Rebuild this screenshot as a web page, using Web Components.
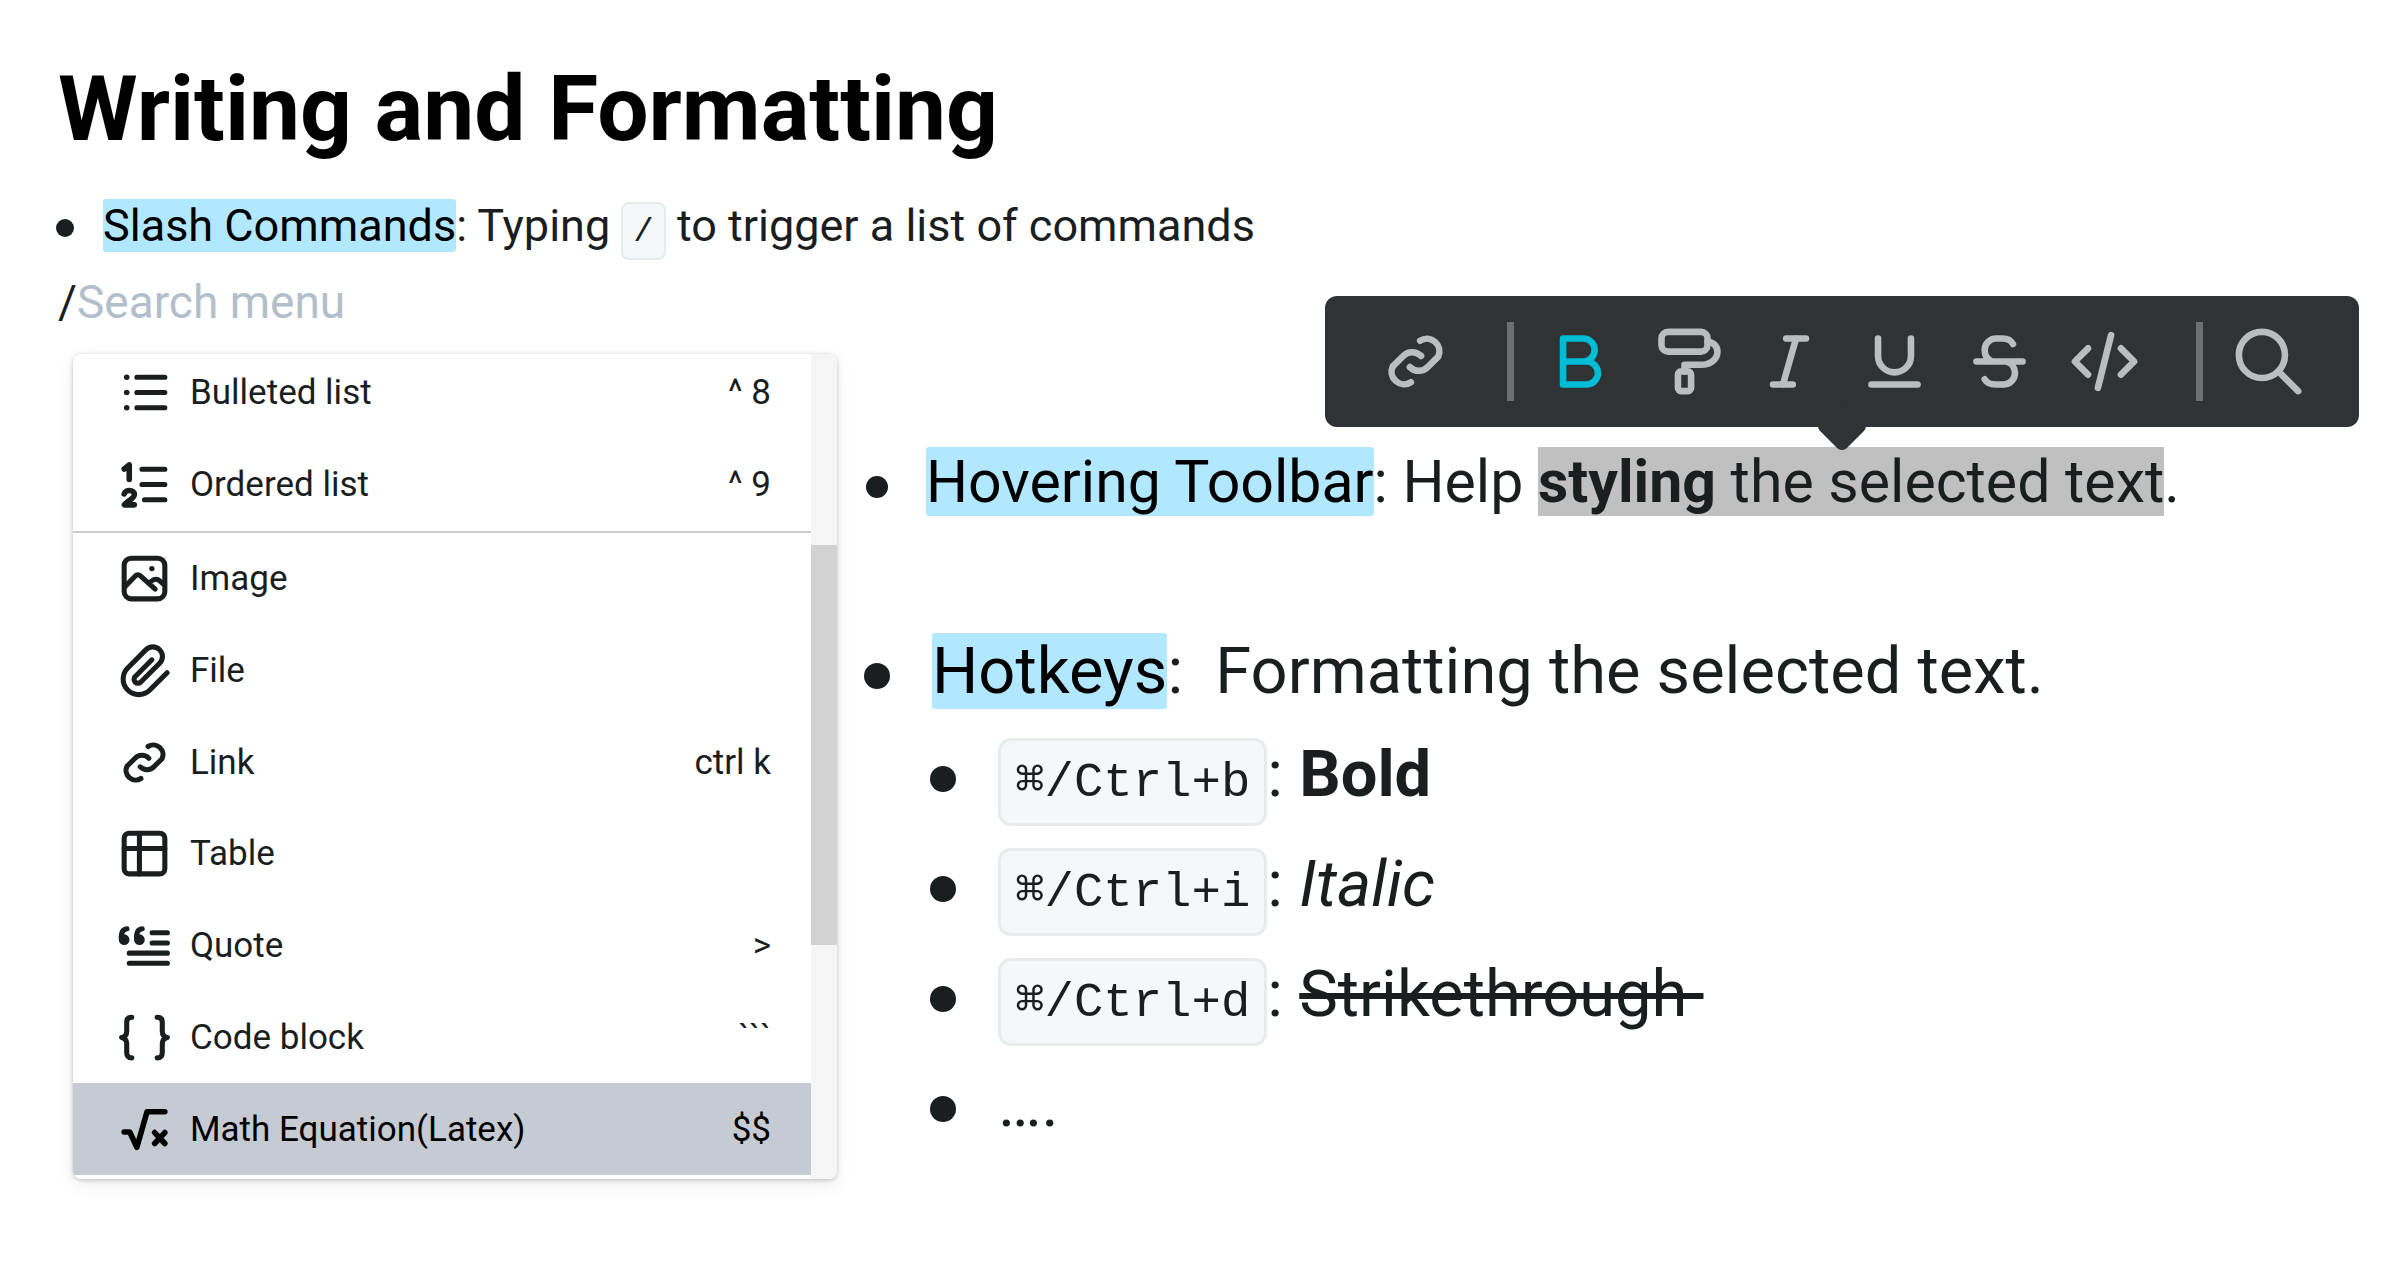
<!DOCTYPE html>
<html lang="en">
<head>
<meta charset="utf-8">
<meta name="viewport" content="width=device-width, initial-scale=1">
<title>Writing and Formatting</title>
<style>
  body { margin: 0; background: #fff; color: #1b1e1f; font-family: Roboto, "Liberation Sans", sans-serif; }
</style>
</head>
<body>
<doc-page>
  <h1 slot="title">Writing and Formatting</h1>
  <bullet-line slot="intro"><text-mark>Slash Commands</text-mark>: Typing <key-cap>/</key-cap> to trigger a list of commands</bullet-line>
  <slash-search slot="search"></slash-search>
  <slash-menu slot="menu">
    <menu-entry icon="bullets" label="Bulleted list" hint="^ 8"></menu-entry>
    <menu-entry icon="numbers" label="Ordered list" hint="^ 9"></menu-entry>
    <menu-divider></menu-divider>
    <menu-entry icon="image" label="Image"></menu-entry>
    <menu-entry icon="clip" label="File"></menu-entry>
    <menu-entry icon="link" label="Link" hint="ctrl k"></menu-entry>
    <menu-entry icon="table" label="Table"></menu-entry>
    <menu-entry icon="quote" label="Quote" hint="&gt;"></menu-entry>
    <menu-entry icon="braces" label="Code block" hint="```"></menu-entry>
    <menu-entry icon="root" label="Math Equation(Latex)" hint="$$" active></menu-entry>
  </slash-menu>
  <bullet-line slot="hover" size="medium"><text-mark>Hovering Toolbar</text-mark>: Help <text-selection><b>styling</b> the selected text</text-selection>.</bullet-line>
  <bullet-line slot="keys" size="large"><text-mark>Hotkeys</text-mark>:&nbsp; Formatting the selected text.</bullet-line>
  <bullet-line slot="shortcut" size="large" spaced><key-cap>⌘/Ctrl+b</key-cap>: <b>Bold</b></bullet-line>
  <bullet-line slot="shortcut" size="large" spaced><key-cap>⌘/Ctrl+i</key-cap>: <i>Italic</i></bullet-line>
  <bullet-line slot="shortcut" size="large" spaced><key-cap>⌘/Ctrl+d</key-cap>: <s>Strikethrough&nbsp;</s></bullet-line>
  <bullet-line slot="shortcut" size="large" spaced>….</bullet-line>
</doc-page>

<script>
const ICONS = {
  bullets: '<path d="M9 6h11M9 12h11M9 18h11"/><g fill="currentColor" stroke="none"><circle cx="5" cy="6" r="1.1"/><circle cx="5" cy="12" r="1.1"/><circle cx="5" cy="18" r="1.1"/></g>',
  numbers: '<path d="M11 6h9M11 12h9M12 18h8"/><path stroke-width="2.2" d="M4 5.900l2-1.600V10M4 15.700c.3-1.700 4-1.900 4 .3C8 17.400 5.400 18.400 4.100 20H8"/>',
  image: '<rect x="4" y="4" width="16" height="16" rx="2.800"/><path d="M4.300 15.200l4.200-4.300a1.300 1.300 0 0 1 1.800 0L16.200 16.200M14 13.800l.8-.8a2.300 2.300 0 0 1 3.200-.1L19.800 14.500"/><circle cx="14.900" cy="8.100" r="1.050" fill="currentColor" stroke="none"/>',
  clip: '<path d="M20.900 12.900L14.100 19.700A6.150 6.150 0 0 1 5.400 11L12.600 3.800A3.790 3.790 0 0 1 17.950 9.170L10.460 16.640A1.560 1.560 0 0 1 8.260 14.440L14.900 7.800"/>',
  link: '<path d="M13.400 5.700A3.800 3.800 0 0 1 18.900 10.500L15.800 13.600A3.800 3.800 0 0 1 10.300 13.700M10.600 18.300A3.800 3.800 0 0 1 5.100 13.500L8.200 10.400A3.800 3.800 0 0 1 13.700 10.300"/>',
  table: '<rect x="4" y="4" width="16" height="16" rx="2"/><path d="M10 4v16M4 10h16"/>',
  quote: '<path d="M15 7h6M15 11h6M6 15h15M6 19h15M2.900 9.500C2.700 7 3.500 5.600 5.100 5.400M8.900 9.500C8.700 7 9.500 5.600 11.100 5.400"/><g fill="currentColor" stroke="none"><circle cx="4" cy="9.700" r="2.100"/><circle cx="10" cy="9.700" r="2.100"/></g>',
  braces: '<path d="M7 4C5.600 4 5 4.800 5 6v3.600c0 1.200-.7 2.100-2 2.400 1.300.3 2 1.200 2 2.400V18c0 1.200.6 2 2 2M17 4c1.400 0 2 .8 2 2v3.600c0 1.200.7 2.100 2 2.400-1.300.3-2 1.200-2 2.400V18c0 1.200-.6 2-2 2"/>',
  root: '<path stroke-width="2.200" d="M4 13h2.200L9 19 13 5h7M16 13.200l4 4.300M20 13.200l-4 4.300"/>',
  bold: '<path d="M7 5h6.100a3.500 3.500 0 0 1 0 7H7zM7 12h7.100a3.500 3.500 0 0 1 0 7H7z"/>',
  paint: '<rect x="5" y="3" width="14" height="6" rx="2"/><rect x="10" y="15" width="4" height="6" rx="1"/><path d="M19 6a3 3 0 0 1 3 3c0 2.200-2 4-5 4h-5v2"/>',
  italic: '<path d="M11 5h6M7 19h6M14 5l-4 14"/>',
  underline: '<path d="M7 5v5.300a5 5 0 0 0 10 0V5M5 19h14"/>',
  strike: '<path d="M5 12h14M16.100 6.700C15.500 5.500 14.300 5 12.900 5H11a3.500 3.500 0 0 0-3.500 3.500c0 1.600.8 2.900 2.200 3.500M14 12c1.700.4 2.700 1.800 2.700 3.500A3.500 3.500 0 0 1 13.200 19H10.900c-1.500 0-2.800-.5-3.400-1.600"/>',
  code: '<path d="M7 8l-4 4 4 4M17 8l4 4-4 4M14 4l-4 16"/>',
  search: '<circle cx="10" cy="10" r="7"/><path d="M15 15l6 6"/>'
};

function define(name, html, setup) {
  const template = document.createElement('template');
  template.innerHTML = html;
  customElements.define(name, class extends HTMLElement {
    connectedCallback() {
      if (this.shadowRoot) return;
      const root = this.attachShadow({ mode: 'open' });
      root.append(template.content.cloneNode(true));
      if (setup) setup(this, root);
    }
  });
}

define('line-icon', `
  <style>
    :host { display: block; width: var(--icon-size, 61px); height: var(--icon-size, 61px); flex: none; }
    svg { display: block; width: 100%; height: 100%; fill: none; stroke: currentColor; stroke-width: 2; stroke-linecap: round; stroke-linejoin: round; }
  </style>
  <svg viewBox="0 0 24 24" aria-hidden="true"></svg>`,
  (host, root) => { root.querySelector('svg').innerHTML = ICONS[host.getAttribute('name')]; });

define('text-mark', `
  <style>
    :host { display: inline; }
    mark { background: #b1e8ff; color: #000; border-radius: 3px; }
  </style><mark><slot></slot></mark>`);

define('key-cap', `
  <style>
    :host { display: inline; }
    code {
      font: var(--cap-size, 34px)/1 "Liberation Mono", "DejaVu Sans Mono", monospace;
      padding: var(--cap-pad, 9px 10px 7px);
      border: var(--cap-border, 2px) solid #e8ebec;
      border-radius: var(--cap-radius, 8px);
      background: #f4f8fb;
    }
  </style><code><slot></slot></code>`);

/* The dot's padding lifts the disc from the baseline towards the middle of the x-height. */
define('bullet-line', `
  <style>
    :host {
      display: flex; align-items: baseline; gap: var(--gap); position: relative;
      font-size: 45px; line-height: 53px; --dot: 18px; --gap: 29px;
    }
    :host([size=medium]) { font-size: 59px; line-height: 69px; --dot: 22px; --gap: 38px; }
    :host([size=large]) {
      font-size: 65px; line-height: 76px; --dot: 26px; --gap: 42px;
      --cap-size: 49px; --cap-pad: 14px 14px 12px; --cap-border: 3px; --cap-radius: 13px;
    }
    :host([spaced]) { line-height: 110px; }
    .dot { flex: none; padding-bottom: 4px; }
    .dot::before { content: ""; display: block; width: var(--dot); height: var(--dot); border-radius: 50%; background: currentColor; }
    .text { flex: 1; min-width: 0; }
  </style><span class="dot"></span><div class="text"><slot></slot></div>`);

/* The toolbar opens above the line and is clamped to the right edge of the column. */
define('text-selection', `
  <style>
    :host { display: inline; }
    .range { background: #c0c0c0; }
    hover-toolbar { position: absolute; right: 0; bottom: 100%; margin-bottom: 20px; }
  </style><hover-toolbar></hover-toolbar><span class="range"><slot></slot></span>`);

define('hover-toolbar', `
  <style>
    :host {
      display: flex; align-items: center; box-sizing: border-box; width: max-content; height: 131px; padding: 0 38px;
      background: #2f3335; color: #b9bec1; border-radius: 12px; --icon-size: 79px;
    }
    :host::after {
      content: ""; position: absolute; left: 50%; bottom: -18px; width: 38px; height: 38px;
      margin-left: -19px; background: #2f3335; border-radius: 7px; transform: rotate(45deg);
    }
    button {
      display: flex; justify-content: center; width: 105px; padding: 0; border: 0;
      background: none; color: inherit; position: relative; z-index: 1;
    }
    button[aria-pressed=true] { color: #00bcd4; }
    .rule { width: 7px; height: 79px; margin: 0 13px 0 39px; background: #6b6f71; }
  </style>
  <button aria-label="Link"><line-icon name="link"></line-icon></button>
  <span class="rule"></span>
  <button aria-label="Bold" aria-pressed="true"><line-icon name="bold"></line-icon></button>
  <button aria-label="Highlight"><line-icon name="paint"></line-icon></button>
  <button aria-label="Italic"><line-icon name="italic"></line-icon></button>
  <button aria-label="Underline"><line-icon name="underline"></line-icon></button>
  <button aria-label="Strikethrough"><line-icon name="strike"></line-icon></button>
  <button aria-label="Code"><line-icon name="code"></line-icon></button>
  <span class="rule"></span>
  <button aria-label="Search"><line-icon name="search"></line-icon></button>`);

define('slash-search', `
  <style>
    :host { display: flex; font-size: 46px; line-height: 54px; }
    input { flex: 1; min-width: 0; height: 54px; padding: 0; border: 0; outline: 0; background: none; font: inherit; color: inherit; }
    input::placeholder { color: #b3becb; opacity: 1; }
  </style><label for="q">/</label><input id="q" placeholder="Search menu" aria-label="Search menu">`);

define('menu-entry', `
  <style>
    :host { display: flex; flex: 1; }
    button {
      flex: 1; display: flex; align-items: center; gap: 15px; padding: 0 40px 0 41px; border: 0;
      background: none; font: 35px/41px Roboto, "Liberation Sans", sans-serif; color: inherit; text-align: left;
    }
    :host([active]) button { background: #c6cad3; color: #000; }
    .label { flex: 1; }
  </style><button><span class="icon"></span><span class="label"></span><span class="hint"></span></button>`,
  (host, root) => {
    const icon = document.createElement('line-icon');
    icon.setAttribute('name', host.getAttribute('icon'));
    root.querySelector('.icon').append(icon);
    root.querySelector('.label').textContent = host.getAttribute('label');
    root.querySelector('.hint').textContent = host.getAttribute('hint') || '';
  });

define('menu-divider', `<style>:host { display: block; height: 2px; background: #cccdce; }</style>`);

define('slash-menu', `
  <style>
    :host {
      display: flex; height: 825px; overflow: hidden; border-radius: 8px; background: #fff;
      box-shadow: 0 1px 4px rgba(0,0,0,.22), 0 6px 18px rgba(0,0,0,.07);
    }
    .view { flex: 1; display: flex; flex-direction: column; justify-content: flex-end; overflow: hidden; padding-bottom: 4px; }
    .list { flex: none; display: flex; flex-direction: column; height: 828px; }
    .track { width: 26px; padding-top: 191px; box-sizing: border-box; background: #f5f5f5; }
    .thumb { height: 400px; background: #d2d2d2; }
  </style>
  <div class="view"><div class="list"><slot></slot></div></div>
  <div class="track"><div class="thumb"></div></div>`);

define('doc-page', `
  <style>
    :host { display: block; padding: 55px 41px 90px 56px; }
    ::slotted(h1) { margin: 0 0 36px; padding-left: 2px; font-size: 91px; line-height: 108px; font-weight: 700; color: #000; }
    ::slotted([slot=search]) { margin: 23px 0 25px; padding-left: 2px; }
    .columns { display: flex; align-items: flex-start; gap: 27px; }
    .menu { flex: 0 0 764px; margin-left: 17px; }
    .notes { flex: 1; min-width: 0; padding-top: 93px; }
    ::slotted([slot=hover]) { margin: 0 0 117px 2px; }
    .shortcuts { padding: 10px 0 0 66px; }
  </style>
  <slot name="title"></slot>
  <slot name="intro"></slot>
  <slot name="search"></slot>
  <div class="columns">
    <div class="menu"><slot name="menu"></slot></div>
    <div class="notes">
      <slot name="hover"></slot>
      <slot name="keys"></slot>
      <div class="shortcuts"><slot name="shortcut"></slot></div>
    </div>
  </div>`);
</script>
</body>
</html>
